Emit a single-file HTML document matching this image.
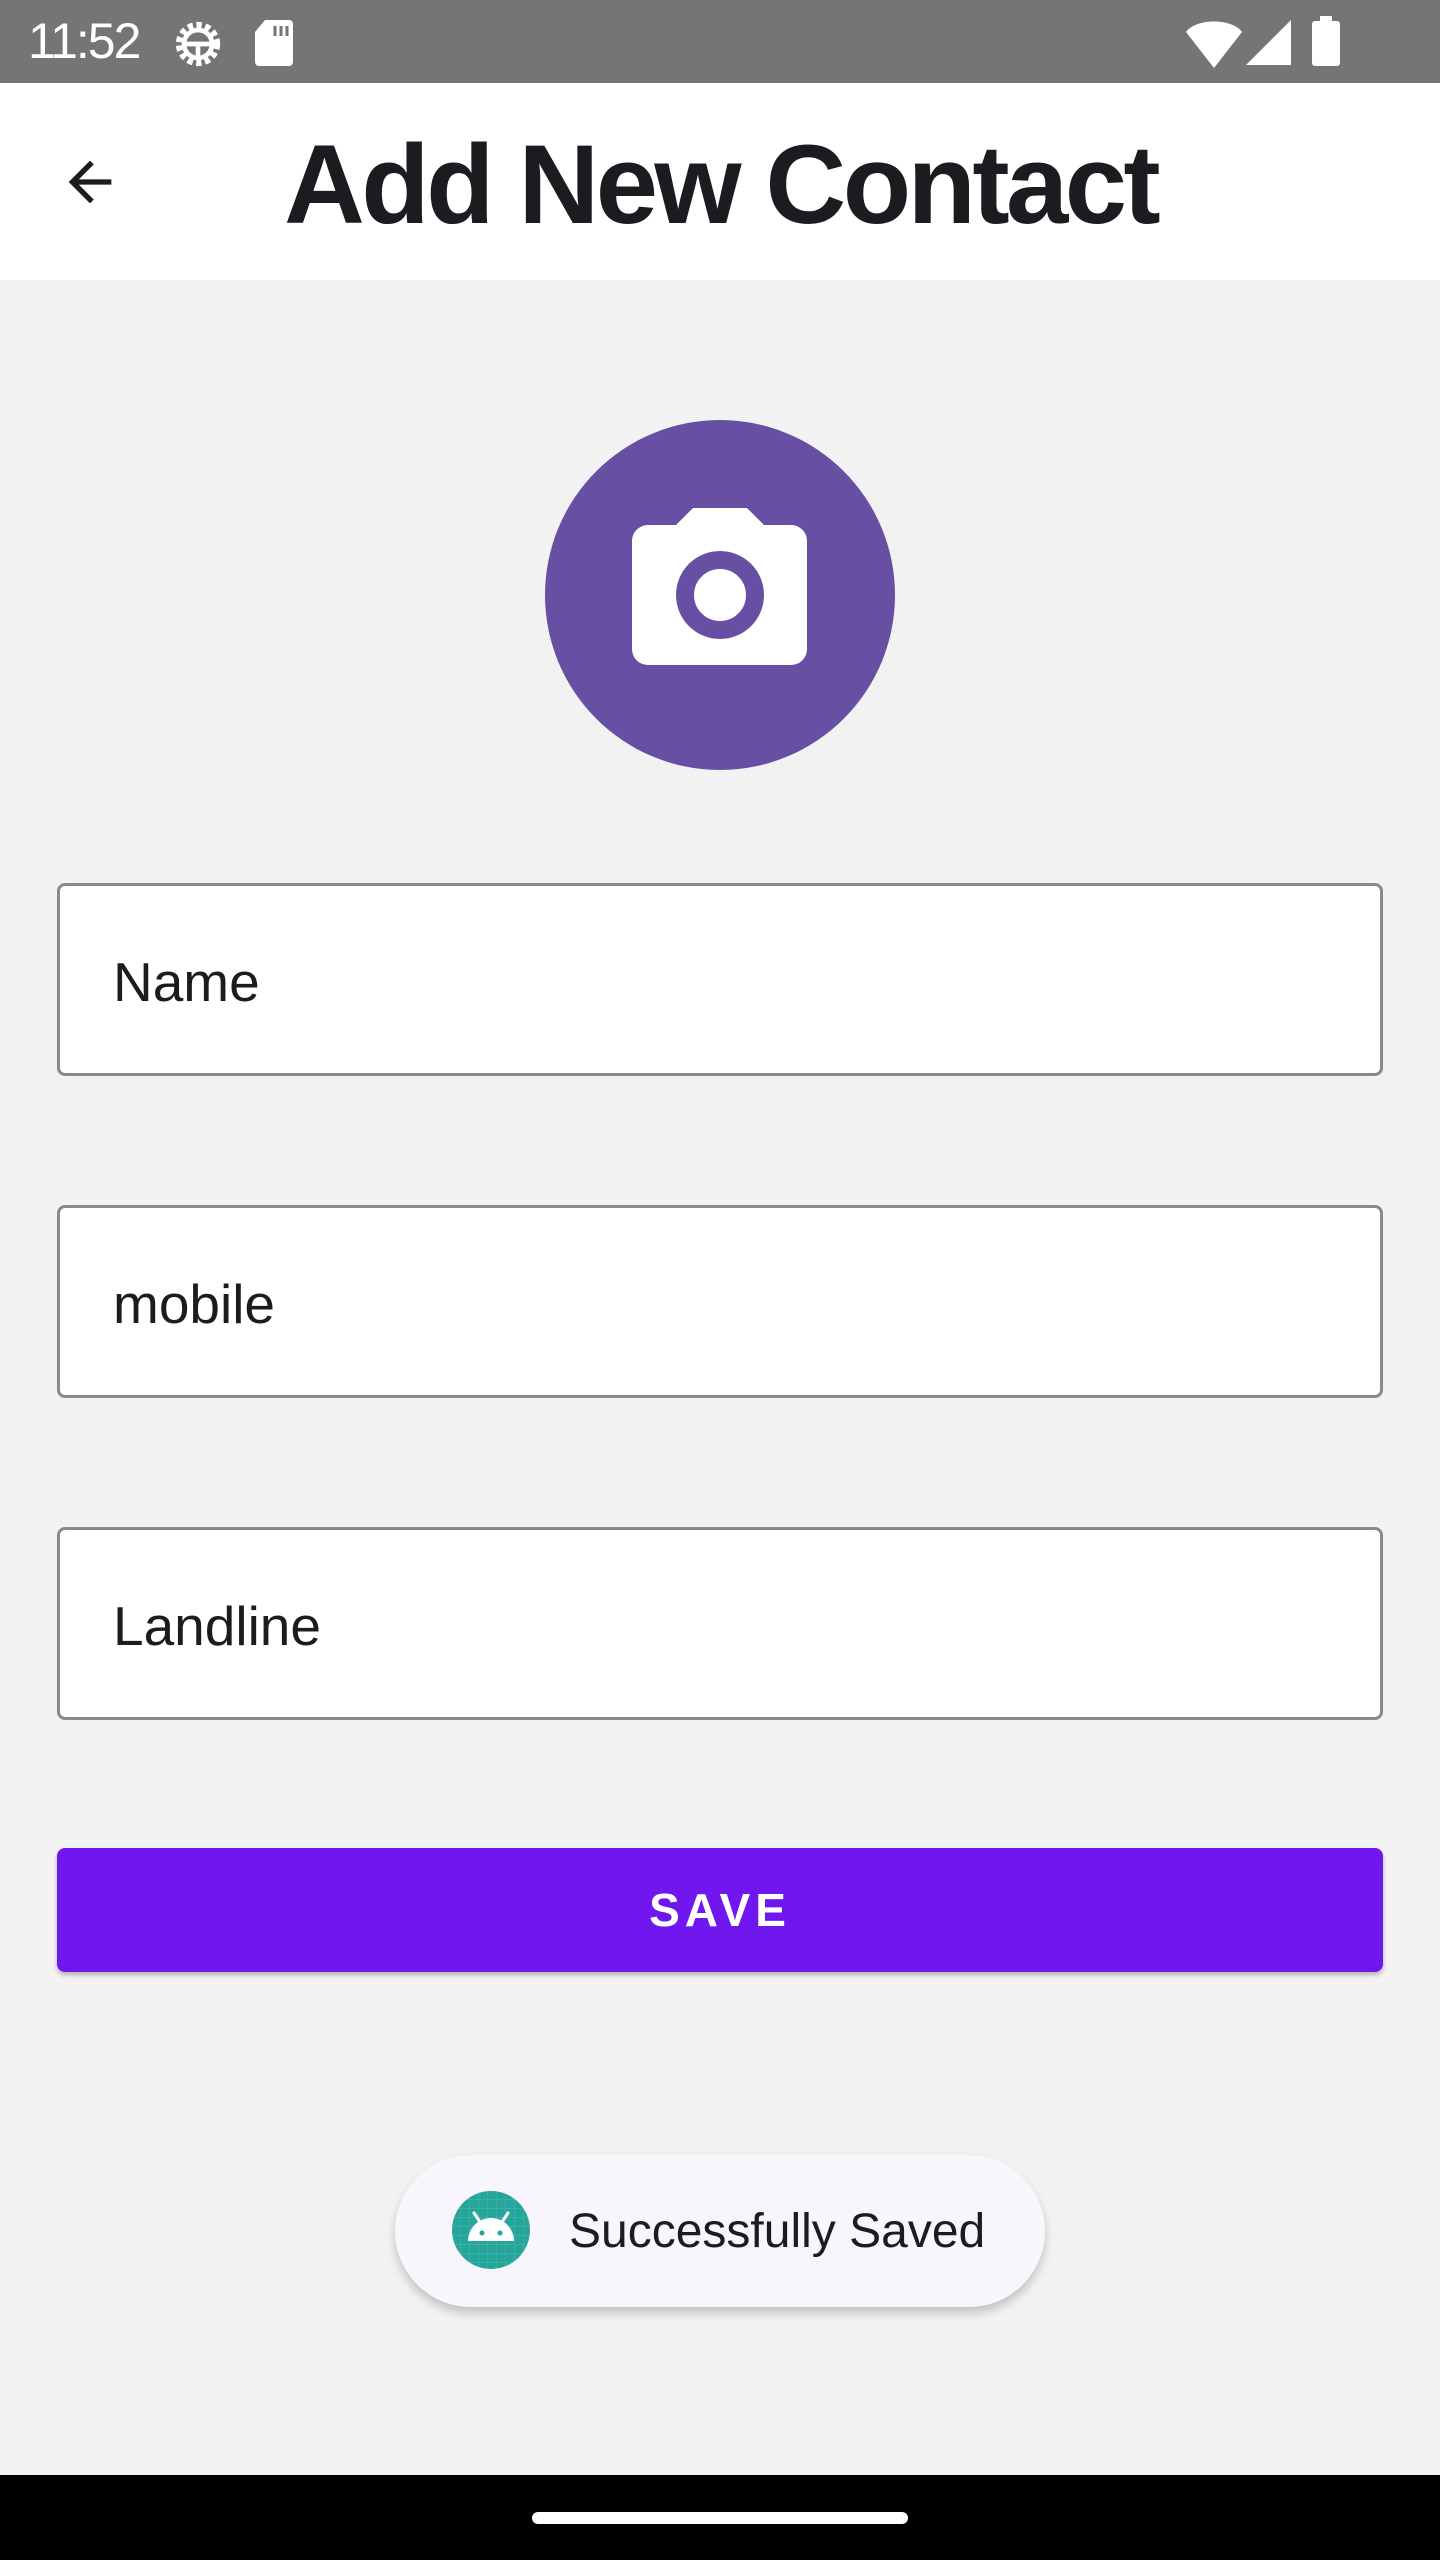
<!DOCTYPE html>
<html><head><meta charset="utf-8"><style>
*{margin:0;padding:0;box-sizing:border-box}
body{width:1440px;height:2560px;background:#f2f2f2;position:relative;overflow:hidden;font-family:"Liberation Sans",sans-serif}
.abs{position:absolute}
.field{position:absolute;left:57px;width:1326px;height:193px;border:3px solid #8a8a8a;border-radius:8px;background:#fff;font-size:55px;color:#1c1b1f;padding-left:53px;line-height:193px}
</style></head><body>
<div class="abs" style="left:0;top:0;width:1440px;height:83px;background:#757575"></div>
<div class="abs" style="left:28px;top:12px;color:#fff;font-size:50px;letter-spacing:-2px">11:52</div>
<svg class="abs" style="left:170px;top:16px" width="56" height="56" viewBox="0 0 24 24"><circle cx="12" cy="12" r="8" fill="none" stroke="#fff" stroke-width="3" stroke-dasharray="2.2 1.5"/><circle cx="12" cy="12" r="6" fill="none" stroke="#fff" stroke-width="2"/><path d="M6 12h12M12 12v6" stroke="#fff" stroke-width="2"/></svg>
<svg class="abs" style="left:255px;top:20px" width="38" height="46" viewBox="0 0 38 46"><path d="M10 0h24a4 4 0 0 1 4 4v38a4 4 0 0 1-4 4H4a4 4 0 0 1-4-4V12z" fill="#fff"/><path d="M20 6v10M26 6v10M32 6v10" stroke="#757575" stroke-width="3"/></svg>
<svg class="abs" style="left:1186px;top:18px" width="56" height="50" viewBox="0 0 56 50"><path d="M0 14C10 0 46 0 56 14L28 50z" fill="#fff"/></svg>
<svg class="abs" style="left:1246px;top:20px" width="45" height="45" viewBox="0 0 45 45"><path d="M45 0V45H0z" fill="#fff"/></svg>
<svg class="abs" style="left:1312px;top:16px" width="28" height="50" viewBox="0 0 28 50"><rect x="8" y="0" width="12" height="6" fill="#fff"/><rect x="0" y="5" width="28" height="45" rx="3" fill="#fff"/></svg>
<div class="abs" style="left:0;top:83px;width:1440px;height:197px;background:#fff"></div>
<svg class="abs" style="left:58px;top:150px" width="64" height="64" viewBox="0 0 24 24"><path d="M20 11H7.83l5.59-5.59L12 4l-8 8 8 8 1.41-1.41L7.83 13H20v-2z" fill="#1c1b1f"/></svg>
<div class="abs" style="left:284px;top:120px;font-size:112px;font-weight:bold;color:#1c1b1f;letter-spacing:-3.6px;line-height:130px">Add New Contact</div>
<svg class="abs" style="left:545px;top:420px" width="350" height="350" viewBox="545 420 350 350"><circle cx="720" cy="595" r="175" fill="#6750a4"/><path d="M693 508h54l17 17h27a16 16 0 0 1 16 16v108a16 16 0 0 1-16 16H648a16 16 0 0 1-16-16V541a16 16 0 0 1 16-16h28z" fill="#fff"/><circle cx="720" cy="595" r="35" fill="none" stroke="#6750a4" stroke-width="18"/></svg>
<div class="field" style="top:883px">Name</div>
<div class="field" style="top:1205px">mobile</div>
<div class="field" style="top:1527px">Landline</div>
<div class="abs" style="left:57px;top:1848px;width:1326px;height:124px;background:#7017f0;border-radius:8px;color:#fff;font-size:46px;font-weight:bold;letter-spacing:5px;text-align:center;line-height:124px;box-shadow:0 3px 5px rgba(0,0,0,.25)">SAVE</div>
<div class="abs" style="left:395px;top:2155px;width:650px;height:152px;background:#f8f6fc;border-radius:76px;box-shadow:0 6px 10px rgba(0,0,0,.2)"></div>
<svg class="abs" style="left:452px;top:2191px" width="78" height="78" viewBox="0 0 78 78"><defs><pattern id="g" width="9" height="9" patternUnits="userSpaceOnUse"><path d="M9 0V9H0" fill="none" stroke="#5fc4b6" stroke-width="1"/></pattern></defs><circle cx="39" cy="39" r="39" fill="#26a69a"/><circle cx="39" cy="39" r="39" fill="url(#g)" opacity=".6"/><path d="M16 50a23 23 0 0 1 46 0z" fill="#fff"/><path d="M22 22l6 9M56 22l-6 9" stroke="#fff" stroke-width="3" stroke-linecap="round"/><circle cx="30" cy="42" r="2.5" fill="#26a69a"/><circle cx="48" cy="42" r="2.5" fill="#26a69a"/></svg>
<div class="abs" style="left:569px;top:2201px;font-size:48px;color:#1c1b1f;line-height:62px">Successfully Saved</div>
<div class="abs" style="left:0;top:2475px;width:1440px;height:85px;background:#000"></div>
<div class="abs" style="left:532px;top:2512px;width:376px;height:12px;background:#fff;border-radius:6px"></div>
</body></html>
